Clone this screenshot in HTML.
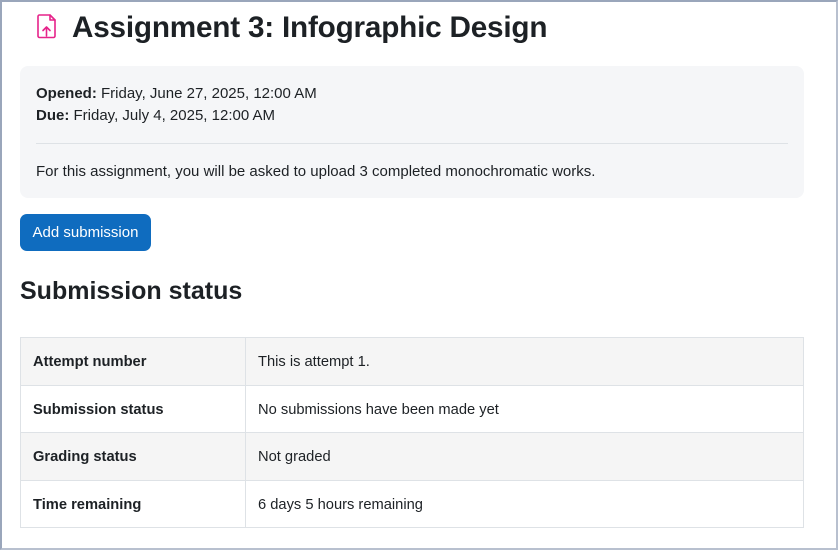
<!DOCTYPE html>
<html><head><style>
html,body{margin:0;padding:0}
body{width:838px;height:550px;overflow:hidden;font-family:"Liberation Sans",sans-serif;color:#1d2125;background:#fff;position:relative}
.frame{position:absolute;left:0;top:0;width:834px;height:546px;border:2px solid #9aa6bb;border-right-color:#b8c0cf;border-bottom-color:#b8c0cf}
h1{position:absolute;left:72px;top:11px;margin:0;font-size:29.7px;font-weight:bold;letter-spacing:-0.2px}
.icon{position:absolute;left:36px;top:13px}
.box{position:absolute;left:20px;top:66px;width:784px;height:132px;background:#f5f6f8;border-radius:8px}
.box p{margin:0;position:absolute;left:16px;font-size:15px}
.hr{position:absolute;left:16px;right:16px;top:77px;border-top:1px solid #dee2e6}
.btn{position:absolute;left:20px;top:214px;width:131px;height:37px;background:#0f6cbf;color:#fff;border-radius:7px;font-size:15px;line-height:38px;text-align:center}
h2{position:absolute;left:20px;top:277px;margin:0;font-size:25px;font-weight:bold}
table{position:absolute;left:20px;top:337px;width:784px;border-collapse:collapse;font-size:14.7px}
td{border:1px solid #dee2e6;height:44.5px;padding:2px 12px 0}
td:first-child{width:200px;font-weight:bold}
tr:nth-child(odd){background:#f5f5f5}
</style></head><body>
<div class="frame"></div>
<svg class="icon" width="22" height="26" viewBox="0 0 22 26" fill="none" stroke="#e6238a" stroke-width="1.6" stroke-linejoin="round" stroke-linecap="round">
<path d="M3 2h11l5 5v16a1.5 1.5 0 0 1-1.5 1.5h-14A1.5 1.5 0 0 1 2 23V3.5A1.5 1.5 0 0 1 3.5 2z"/>
<path d="M14 2v5h5"/>
<path d="M10.5 23V14M7 17.5l3.5-3.5 3.5 3.5"/>
</svg>
<h1>Assignment 3: Infographic Design</h1>
<div class="box">
<p style="top:19px"><b>Opened:</b> Friday, June 27, 2025, 12:00 AM</p>
<p style="top:41px"><b>Due:</b> Friday, July 4, 2025, 12:00 AM</p>
<div class="hr"></div>
<p style="top:97px">For this assignment, you will be asked to upload 3 completed monochromatic works.</p>
</div>
<div class="btn">Add submission</div>
<h2>Submission status</h2>
<table>
<tr><td>Attempt number</td><td>This is attempt 1.</td></tr>
<tr><td>Submission status</td><td>No submissions have been made yet</td></tr>
<tr><td>Grading status</td><td>Not graded</td></tr>
<tr><td>Time remaining</td><td>6 days 5 hours remaining</td></tr>
</table>
</body></html>
